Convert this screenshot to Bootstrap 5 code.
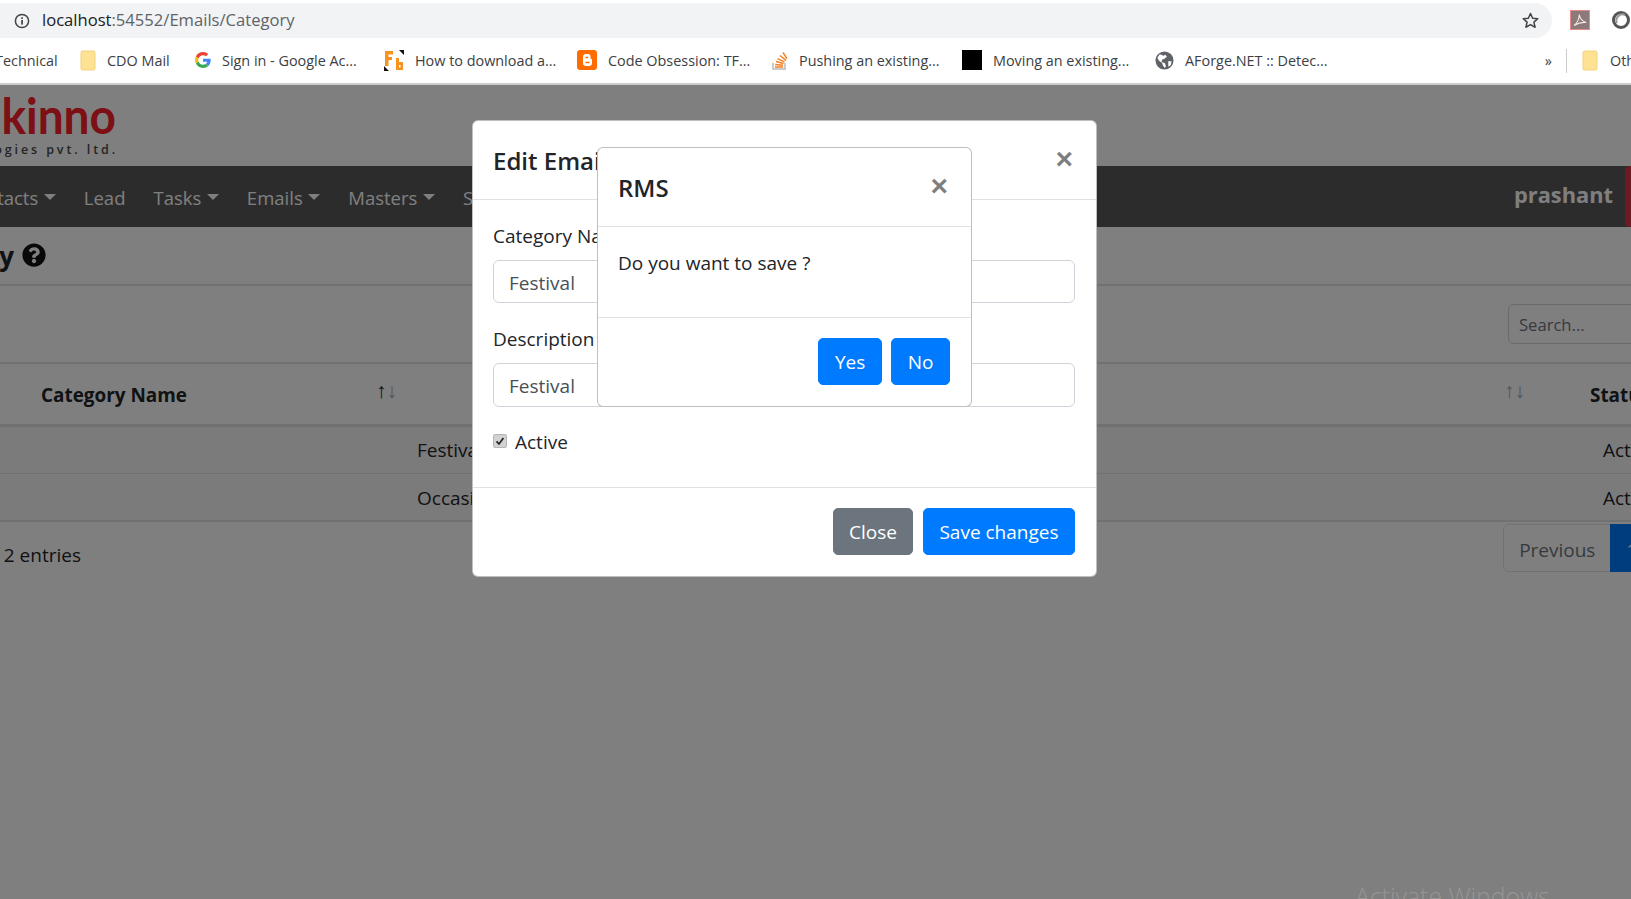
<!DOCTYPE html>
<html lang="en"><head><meta charset="utf-8"><title>Emails Category</title>
<link rel="stylesheet" href="https://cdn.jsdelivr.net/npm/bootstrap@5.3.0/dist/css/bootstrap.min.css">
<style>
html,body{height:100%;overflow:hidden}
body{font-family:"Open Sans","Liberation Sans",sans-serif;font-size:19px;color:#212529;background:#fff}
.chrome{height:85px;border-bottom:2px solid #ccc;background:#fff}
.urlbar{height:35px;margin-top:3px;width:1552px;background:#f1f3f4;border-radius:0 18px 18px 0;padding:0 12px 0 14px;font-size:16.6px;color:#5f6368}
.urlbar b{font-weight:400;color:#202124}
.chrome-top{height:38px;display:flex;align-items:flex-start}
.tools{gap:21px;padding-left:18px;padding-top:10px}
.marks{height:45px;font-size:14.4px;color:#3c4043;white-space:nowrap;margin-left:-5px;overflow:hidden}
.mk{display:flex;align-items:center;gap:11px;flex:none}
.mk-0{width:85px}.mk-1{width:115px}.mk-2{width:189px}.mk-3{width:193px}.mk-4{width:194px}.mk-5{width:191px}.mk-6{width:193px}.mk-7{width:180px}
.chev{margin-left:auto;flex:none}
.sep{width:1px;height:24px;background:#ccc;margin:0 15px 0 14px;flex:none}
.tail{width:49px;gap:12px;overflow:hidden}
.page{position:relative;height:814px;overflow:hidden}
.logo-box{width:116px;height:81px;display:flex;flex-direction:column;align-items:flex-end;white-space:nowrap;padding-top:6px}
.logo-word{font-family:Lato,sans-serif;font-weight:700;font-size:46px;line-height:52px;color:#f8202a;transform:scaleY(1.07);transform-origin:50% 80%}
.logo-tag{font-weight:600;font-size:12.5px;letter-spacing:2.9px;line-height:16px;color:#4a4a4a;margin-top:-1px;margin-right:-2px}
.topnav{height:61px;background:#585858;padding:0}
.topnav.navbar-expand .navbar-nav{margin-left:-37px;gap:28px;flex-direction:row}
.topnav.navbar-expand .navbar-nav .nav-link{color:#fff;padding:0;line-height:28px;font-size:18.5px;position:relative;top:1px}
.topnav .dropdown-toggle::after{border-top-width:.36em;border-left-width:.36em;border-right-width:.36em;margin-left:.3em;vertical-align:.22em}
.who{font-weight:700;font-size:21.8px;color:#fff;margin-right:12px;position:relative;top:-1px}
.redtab{width:6px;height:61px;background:#dc3545;border-radius:5px 0 0 5px}
.wide{width:1726px}
.headline{height:59px;border-bottom:2px solid #dee2e6;display:flex;align-items:center}
.headbox{width:14px;display:flex;justify-content:flex-end;white-space:nowrap;font-size:26px;font-weight:700;line-height:36px}
.helpicon{width:24px;height:24px;margin-left:8px;margin-bottom:2px;color:#111}
.searchrow{height:76px;display:flex;justify-content:flex-end;align-items:flex-start;padding-top:18px}
.searchrow .form-control{width:218px;height:40px;font-size:16.6px;padding:4px 10px;border-color:#ced4da}
.searchrow .form-control::placeholder{color:#6c757d}
.tbl{table-layout:fixed;width:1730px;margin:0;color:#212529}
.tbl th{height:62px;font-weight:700;vertical-align:middle;padding:2px 0 0;border-top:2px solid #dee2e6;border-bottom:3px solid #dee2e6;font-size:18.9px}
.tbl>tbody>tr>td{height:48px;padding:2px 0 0 15px;vertical-align:middle;background-color:#f7f7f7;border-bottom:1px solid #dee2e6}
.tbl>tbody>tr:last-child>td{border-bottom:2px solid #dee2e6;height:48px}
.thx{display:flex;justify-content:space-between;padding-right:5px;white-space:nowrap}
.tbl th.pl-a{padding-left:41px}.tbl th.pl-b{padding-left:80px}.tbl th.pl-c{padding-left:60px}
.tbl>tbody>tr>td.pl-d{padding-left:73px}
.sorter{font-size:21px;font-weight:400;line-height:20px;color:#a8a8a8;position:relative;top:-1px}
.sorter i{font-style:normal;color:#222}
.footrow{display:flex;justify-content:space-between;padding-top:2px}
.entries{width:81px;display:flex;justify-content:flex-end;white-space:nowrap;padding-top:17px;line-height:28px}
.pagination{margin:0;font-size:19px}
.page-link{height:48px;padding:11px 15px 7px;line-height:28px;font-size:19px}
.page-item.disabled .page-link{color:#6c757d;background:#fff;border-color:#dee2e6}
.page-item.active .page-link{background:#007bff;border-color:#007bff;color:#fff}
.scrim{position:absolute;left:0;top:0;width:100%;height:100%;z-index:10}
.dlg{position:absolute}
.dlg-edit{left:472px;top:35px;width:625px;z-index:20}
.dlg-ask{left:597px;top:62px;width:375px;z-index:30}
.dlg .modal-content{border-radius:6px;overflow:hidden;background:#fff;border:1px solid rgba(0,0,0,.25);color:#212529}
.dlg .modal-header{align-items:flex-start;justify-content:space-between;padding:21px 23px 0 20px;border-bottom:1px solid #dee2e6}
.dlg-edit .modal-header{height:79px}
.dlg-ask .modal-header{height:79px}
.dlg .modal-title{font-size:24px;font-weight:600;line-height:36px;margin-top:1px;white-space:nowrap}
.xbtn{border:0;background:none;padding:2px 0 0;font-size:30px;line-height:30px;font-weight:700;color:#000;opacity:.5;font-family:"Liberation Sans",sans-serif}
.dlg-edit .modal-body{height:287px;padding:21px 21px 0 20px}
.dlg-ask .modal-body{height:90px;padding:22px 20px 0}
.fld-label{display:block;line-height:30px;margin-bottom:9px;white-space:nowrap}
.fld{height:43px;font-size:19px;padding:7px 15px 5px;margin-bottom:21px;color:#495057;border-color:#ced4da}
.fld.tall{height:44px;margin-bottom:20px}
.chk{display:flex;align-items:center;gap:8px;line-height:30px}
.chk input{appearance:none;width:14px;height:14px;margin:-2px 0 0;background:#d2d2d2 url("data:image/svg+xml,%3Csvg xmlns='http://www.w3.org/2000/svg' viewBox='0 0 14 14'%3E%3Cpath d='M3 7.500l2.800 3L11 3.500' fill='none' stroke='%23222' stroke-width='2'/%3E%3C/svg%3E") center/100% no-repeat;border:1px solid #b5b5b5;border-radius:2px}
.dlg .modal-footer{padding:20px 21px 21px 20px;gap:9.500px;justify-content:flex-end;border-top:1px solid #dee2e6}
.dlg .modal-footer>*{margin:0}
.dlg .btn{font-size:19px;line-height:29px;padding:9px 15.500px 7px;border-radius:5px}
.dlg .btn-primary{background:#007bff;border-color:#007bff}
.dlg .btn-secondary{background:#6c757d;border-color:#6c757d}
.winmark{position:absolute;left:1355px;top:794px;z-index:40;font-size:24.8px;font-weight:300;line-height:34px;color:#959595;white-space:nowrap}
</style></head>
<body>
<header class="chrome">
  <div class="chrome-top">
    <div class="urlbar d-flex align-items-center">
      <svg width="16" height="16" viewBox="0 0 16 16" class="me-2 flex-shrink-0"><circle cx="8" cy="8" r="6.6" fill="none" stroke="#444" stroke-width="1.5"/><rect x="7.2" y="7" width="1.7" height="4.6" fill="#444"/><rect x="7.2" y="4.3" width="1.7" height="1.7" fill="#444"/></svg>
      <span class="ms-1"><b>localhost</b>:54552/Emails/Category</span>
      <svg class="ms-auto" width="19" height="19" viewBox="0 0 24 24"><path d="M12 3.2l2.7 6 6.5.6-4.9 4.3 1.5 6.4L12 17.1l-5.8 3.4 1.5-6.4-4.9-4.3 6.5-.6z" fill="none" stroke="#444" stroke-width="1.9" stroke-linejoin="round"/></svg>
    </div>
    <div class="d-flex tools align-items-center">
      <svg width="20" height="20" viewBox="0 0 20 20"><rect x=".5" y=".5" width="19" height="19" fill="#8c7a7a" stroke="#e98a8a"/><path d="M4 15.5c3-2 5-6.500 5.300-11 .6 4 3 7 7 8-4-.5-8 .5-12.300 3z" fill="none" stroke="#f2e6e6" stroke-width="1.1"/></svg>
      <svg width="20" height="20" viewBox="0 0 20 20"><circle cx="10" cy="10" r="7.500" fill="#fff" stroke="#555" stroke-width="3"/><path d="M6 13a6 6 0 0 1 8-8" fill="none" stroke="#999" stroke-width="2"/></svg>
    </div>
  </div>
  <nav class="d-flex align-items-center marks">
    <span class="mk mk-0">Technical</span>
    <span class="mk mk-1"><svg width="16" height="21" viewBox="0 0 16 21"><path d="M1 2.500a1.500 1.500 0 0 1 1.500-1.500h11a1.500 1.500 0 0 1 1.500 1.500v16a1.500 1.500 0 0 1-1.500 1.500h-11a1.500 1.500 0 0 1-1.500-1.500z" fill="#fde293" stroke="#f4d279"/></svg>CDO Mail</span>
    <span class="mk mk-2"><svg width="16" height="16" viewBox="0 0 48 48"><path fill="#ea4335" d="M24 9.500c3.500 0 6.700 1.300 9.100 3.500l6.800-6.800C35.800 2.400 30.300 0 24 0 14.600 0 6.500 5.400 2.600 13.200l7.900 6.200C12.400 13.700 17.700 9.500 24 9.500z"/><path fill="#4285f4" d="M47 24.500c0-1.600-.2-3.100-.4-4.500H24v9h12.900c-.6 3-2.200 5.500-4.700 7.200l7.600 5.900C44.300 38 47 31.800 47 24.500z"/><path fill="#fbbc05" d="M10.500 28.600c-.5-1.400-.8-3-.8-4.600s.3-3.200.8-4.600l-7.900-6.200C.9 16.500 0 20.100 0 24s.9 7.500 2.600 10.800z"/><path fill="#34a853" d="M24 48c6.500 0 11.900-2.100 15.900-5.900l-7.600-5.900c-2.100 1.400-4.900 2.300-8.300 2.300-6.300 0-11.600-4.200-13.500-10l-7.900 6.200C6.500 42.600 14.600 48 24 48z"/></svg>Sign in - Google Ac...</span>
    <span class="mk mk-3"><svg width="20" height="21" viewBox="0 0 20 21"><path d="M15 0h5v5zM0 16l5 5H0z" fill="#111"/><path d="M1 1h8v3.500H4.500V7H8v3H4.500v6H1zM12 8h3v4h4v8h-7zM15 15v2.500h1.500V15z" fill="#f7931e" fill-rule="evenodd"/></svg>How to download a...</span>
    <span class="mk mk-4"><svg width="20" height="20" viewBox="0 0 20 20"><rect width="20" height="20" rx="3" fill="#ff6d00"/><path d="M6 7a3 3 0 0 1 3-3h2a2.500 2.500 0 0 1 2.500 2.500V8a1 1 0 0 0 1 1 1 1 0 0 1 .5 1v3a3 3 0 0 1-3 3H9a3 3 0 0 1-3-3z" fill="#fff"/><path d="M8.500 7.500h2.500M8.500 12.500h4" stroke="#ff6d00" stroke-width="1.400"/></svg>Code Obsession: TF...</span>
    <span class="mk mk-5"><svg width="17" height="19" viewBox="0 0 17 19"><path d="M2 12v6h12v-6" fill="none" stroke="#bcbbbb" stroke-width="1.500"/><path d="M4 16h8M4.200 13.500l7.800.8M5 10.600l7.600 1.800M6.500 7.600l7 3.300M9 4.500l6 4.900M12 1.500l4 6.200" stroke="#f48024" stroke-width="1.500"/></svg>Pushing an existing...</span>
    <span class="mk mk-6"><svg width="20" height="20" viewBox="0 0 20 20"><rect width="20" height="20" fill="#000"/></svg>Moving an existing...</span>
    <span class="mk mk-7"><svg width="19" height="19" viewBox="0 0 20 20"><circle cx="10" cy="10" r="9.500" fill="#5f6368"/><path d="M5 3.500l4 1.500 2-1 1.500 2-3 2.500-2 .5-.5 2.500 3.500 1.500 1 3-1 2-2-2.500-1-3-3.500-2.500-1.500-3zM14 10.500l3.500.5-1 4-2.500 1.500z" fill="#fff"/></svg>AForge.NET :: Detec...</span>
    <span class="chev">»</span>
    <span class="sep"></span>
    <span class="mk tail"><svg width="16" height="21" viewBox="0 0 16 21" class="flex-shrink-0"><path d="M1 2.500a1.500 1.500 0 0 1 1.500-1.500h11a1.500 1.500 0 0 1 1.500 1.500v16a1.500 1.500 0 0 1-1.500 1.500h-11a1.500 1.500 0 0 1-1.500-1.500z" fill="#fde293" stroke="#f4d279"/></svg><span>Other bookmarks</span></span>
  </nav>
</header>
<main class="page">
  <div class="logo-box"><span class="logo-word">kinno</span><span class="logo-tag">technologies pvt. ltd.</span></div>
  <nav class="navbar navbar-expand topnav justify-content-between">
    <ul class="navbar-nav">
      <li class="nav-item"><a class="nav-link dropdown-toggle" href="#">Contacts</a></li>
      <li class="nav-item"><a class="nav-link" href="#">Lead</a></li>
      <li class="nav-item"><a class="nav-link dropdown-toggle" href="#">Tasks</a></li>
      <li class="nav-item"><a class="nav-link dropdown-toggle" href="#">Emails</a></li>
      <li class="nav-item"><a class="nav-link dropdown-toggle" href="#">Masters</a></li>
      <li class="nav-item"><a class="nav-link" href="#">Setup</a></li>
    </ul>
    <div class="d-flex align-items-center"><span class="who">prashant</span><span class="redtab"></span></div>
  </nav>
  <div class="wide">
    <div class="headline"><div class="headbox"><span>Email Category</span></div>
      <svg class="helpicon" viewBox="0 0 512 512"><path fill="currentColor" d="M504 256c0 136.997-111.043 248-248 248S8 392.997 8 256C8 119.083 119.043 8 256 8s248 111.083 248 248zM262.655 90c-54.497 0-89.255 22.957-116.549 63.758-3.536 5.286-2.353 12.415 2.715 16.258l34.699 26.31c5.205 3.947 12.621 3.008 16.665-2.122 17.864-22.658 30.113-35.797 57.303-35.797 20.429 0 45.698 13.148 45.698 32.958 0 14.976-12.363 22.667-32.534 33.976C247.128 238.528 216 254.941 216 296v4c0 6.627 5.373 12 12 12h56c6.627 0 12-5.373 12-12v-1.333c0-28.462 83.186-29.647 83.186-106.667 0-58.002-60.165-102-116.531-102zM256 338c-25.365 0-46 20.635-46 46 0 25.364 20.635 46 46 46s46-20.636 46-46c0-25.365-20.635-46-46-46z"/></svg>
    </div>
    <div class="searchrow"><input class="form-control" type="search" placeholder="Search..."></div>
    <table class="table tbl">
      <colgroup><col style="width:402px"><col style="width:1128px"><col style="width:200px"></colgroup>
      <thead><tr>
        <th class="pl-a"><div class="thx"><span>Category Name</span><span class="sorter"><i>↑</i>↓</span></div></th>
        <th class="pl-b"><div class="thx"><span>Description</span><span class="sorter">↑↓</span></div></th>
        <th class="pl-c">Status</th>
      </tr></thead>
      <tbody>
        <tr><td></td><td>Festival</td><td class="pl-d">Active</td></tr>
        <tr><td></td><td>Occasion</td><td class="pl-d">Active</td></tr>
      </tbody>
    </table>
    <div class="footrow">
      <div class="entries"><span>Showing 1 to 2 of 2 entries</span></div>
      <ul class="pagination">
        <li class="page-item disabled"><a class="page-link" href="#">Previous</a></li>
        <li class="page-item active"><a class="page-link" href="#">1</a></li>
        <li class="page-item disabled"><a class="page-link" href="#">Next</a></li>
      </ul>
    </div>
  </div>

  <div class="modal-backdrop show scrim"></div>

  <section class="dlg dlg-edit"><div class="modal-content">
    <div class="modal-header"><h5 class="modal-title">Edit Email Category</h5><button class="xbtn" type="button">×</button></div>
    <div class="modal-body">
      <label class="fld-label">Category Name</label>
      <input class="form-control fld" value="Festival">
      <label class="fld-label">Description</label>
      <input class="form-control fld tall" value="Festival">
      <label class="chk"><input type="checkbox" checked>Active</label>
    </div>
    <div class="modal-footer"><button class="btn btn-secondary" type="button">Close</button><button class="btn btn-primary" type="button">Save changes</button></div>
  </div></section>

  <section class="dlg dlg-ask"><div class="modal-content">
    <div class="modal-header"><h5 class="modal-title">RMS</h5><button class="xbtn" type="button">×</button></div>
    <div class="modal-body">Do you want to save ?</div>
    <div class="modal-footer"><button class="btn btn-primary" type="button">Yes</button><button class="btn btn-primary" type="button">No</button></div>
  </div></section>

  <div class="winmark">Activate Windows</div>
</main>
</body></html>
